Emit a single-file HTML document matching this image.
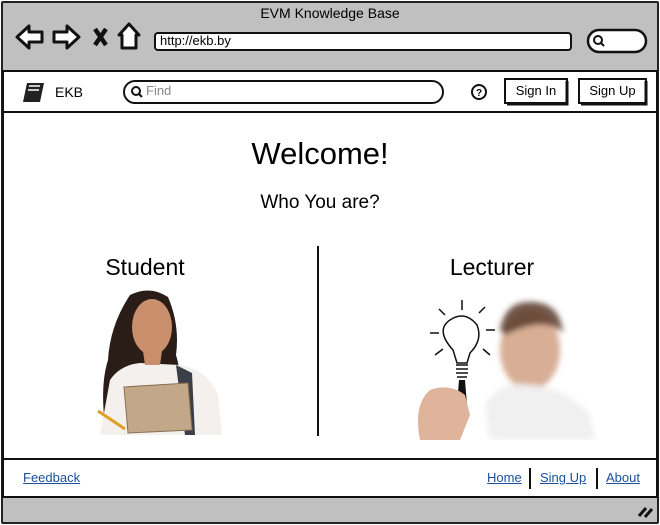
<!DOCTYPE html>
<html><head><meta charset="utf-8"><style>
*{margin:0;padding:0;box-sizing:border-box}
body{width:660px;height:525px;background:#fff;font-family:"Liberation Sans",sans-serif;position:relative;overflow:hidden}
.a{position:absolute}
.t{color:#000}
a{color:#1a4f9c;text-decoration:underline}
</style></head><body>
<div class="a" style="left:1px;top:1px;width:658px;height:523px;background:#c0c0c0;border:2px solid #222;border-radius:2px"></div>
<div class="a t" style="left:0;top:5px;width:660px;text-align:center;font-size:14px">EVM Knowledge Base</div>
<svg class="a" style="left:0;top:0" width="660" height="70">
<g fill="#fff" stroke="#111" stroke-width="3" stroke-linejoin="round">
<path d="M17 37 L29 26 L29 32 L42 32 L42 42 L29 42 L29 48 Z"/>
<path d="M79 37 L67 26 L67 32 L54 32 L54 42 L67 42 L67 48 Z"/>
<path d="M129 24 L119 35 L122 35 L122 48 L136 48 L136 35 L139 35 Z"/>
</g>
<path d="M95 29 L106 45 M106 29 L95 45" stroke="#111" stroke-width="4.5"/>
<rect x="155" y="33" width="416" height="17" rx="3" fill="#fff" stroke="#111" stroke-width="2"/>
<rect x="588" y="30" width="58" height="22" rx="11" fill="#fff" stroke="#111" stroke-width="2.5"/>
<circle cx="598" cy="40" r="4" fill="none" stroke="#111" stroke-width="2"/><path d="M601 43 L604 46" stroke="#111" stroke-width="2"/>
</svg>
<div class="a t" style="left:160px;top:33px;font-size:13px">http://ekb.by</div>
<div class="a" style="left:2px;top:70px;width:656px;height:43px;background:#fff;border:2px solid #111"></div>
<svg class="a" style="left:0;top:70px" width="660" height="43">
<path d="M27 13 L44 13 L40 32 L23 32 Z" fill="#222"/><path d="M29 16 L40 16 M28 20 L39 20" stroke="#fff" stroke-width="1.5"/>
<rect x="124" y="11" width="319" height="22" rx="11" fill="#fff" stroke="#111" stroke-width="2"/>
<circle cx="136" cy="21" r="4" fill="none" stroke="#111" stroke-width="2"/><path d="M139 24 L142 27" stroke="#111" stroke-width="2"/>
<circle cx="479" cy="22" r="7" fill="none" stroke="#111" stroke-width="2"/>
<text x="479" y="26" font-size="10" font-weight="bold" text-anchor="middle" font-family="Liberation Sans">?</text>
<rect x="505" y="9" width="62" height="24" fill="#fff" stroke="#111" stroke-width="2"/><path d="M567 11 L567 34 L507 34" stroke="#111" stroke-width="3" fill="none"/>
<rect x="579" y="9" width="67" height="24" fill="#fff" stroke="#111" stroke-width="2"/><path d="M646 11 L646 34 L581 34" stroke="#111" stroke-width="3" fill="none"/>
</svg>
<div class="a t" style="left:55px;top:84px;font-size:14px">EKB</div>
<div class="a" style="left:146px;top:83px;font-size:13px;color:#888">Find</div>
<div class="a t" style="left:505px;top:83px;width:62px;text-align:center;font-size:13px">Sign In</div>
<div class="a t" style="left:579px;top:83px;width:67px;text-align:center;font-size:13px">Sign Up</div>
<div class="a" style="left:2px;top:113px;width:656px;height:346px;background:#fff;border-left:2px solid #111;border-right:2px solid #111"></div>
<div class="a t" style="left:0;top:136px;width:640px;text-align:center;font-size:31px">Welcome!</div>
<div class="a t" style="left:0;top:192px;width:640px;text-align:center;font-size:19px">Who You are?</div>
<div class="a t" style="left:85px;top:254px;width:120px;text-align:center;font-size:23px">Student</div>
<div class="a t" style="left:432px;top:254px;width:120px;text-align:center;font-size:23px">Lecturer</div>
<div class="a" style="left:317px;top:246px;width:2px;height:190px;background:#111"></div>
<svg class="a" style="left:90px;top:285px" width="150" height="152">
<path d="M40 10 Q60 0 78 12 Q90 40 86 70 Q95 100 90 135 L15 140 Q10 100 18 75 Q20 40 40 10Z" fill="#2a1d18"/>
<path d="M20 95 Q30 80 50 78 L90 80 Q118 85 128 110 L132 150 L10 150 Z" fill="#f4f0ee"/>
<path d="M86 80 L102 88 L105 150 L95 150 Z" fill="#3a3f48"/>
<ellipse cx="62" cy="42" rx="20" ry="28" fill="#c98f6c"/>
<path d="M53 66 L72 66 L70 80 L55 80Z" fill="#c98f6c"/>
<path d="M34 102 L98 98 L102 145 L38 148 Z" fill="#c2a888" stroke="#8a7050"/>
<path d="M8 126 L35 144" stroke="#e0a020" stroke-width="3"/>
</svg>
<svg class="a" style="left:405px;top:295px" width="200" height="145">
<defs><filter id="b"><feGaussianBlur stdDeviation="3"/></filter></defs>
<g filter="url(#b)">
<ellipse cx="125" cy="55" rx="30" ry="40" fill="#d4a58a" opacity=".9"/>
<path d="M95 35 Q100 5 128 7 Q155 8 158 38 Q140 20 100 40Z" fill="#5a3b2a" opacity=".85"/>
<path d="M80 110 Q95 85 125 90 Q160 92 185 120 L190 145 L85 145Z" fill="#f0f0f0"/>
</g>
<g fill="none" stroke="#111" stroke-width="1.5">
<path d="M48 55 Q30 35 45 25 Q60 15 72 30 Q78 45 65 58 L62 68 L52 68Z"/>
<path d="M51 70 L63 70 M51 74 L63 74 M51 78 L63 78 M52 82 L62 82"/>
<path d="M57 5 L57 15 M34 14 L40 20 M80 12 L74 18 M25 38 L34 38 M90 35 L81 35 M30 60 L38 54 M85 60 L78 54"/>
</g>
<path d="M54 85 L60 85 L62 110 L52 110Z" fill="#111"/>
<path d="M15 145 Q8 110 25 95 Q45 88 60 100 L65 120 L55 145Z" fill="#e0b49b"/>
</svg>
<div class="a" style="left:2px;top:458px;width:656px;height:40px;background:#fff;border:2px solid #111"></div>
<a class="a" style="left:23px;top:470px;font-size:13px">Feedback</a>
<a class="a" style="left:487px;top:470px;font-size:13px">Home</a>
<div class="a" style="left:529px;top:468px;width:2px;height:21px;background:#111"></div>
<a class="a" style="left:540px;top:470px;font-size:13px">Sing Up</a>
<div class="a" style="left:596px;top:468px;width:2px;height:21px;background:#111"></div>
<a class="a" style="left:606px;top:470px;font-size:13px">About</a>
<svg class="a" style="left:636px;top:502px" width="20" height="18"><path d="M3 14 L10 6 M9 15 L16 7" stroke="#111" stroke-width="3"/></svg>
</body></html>
